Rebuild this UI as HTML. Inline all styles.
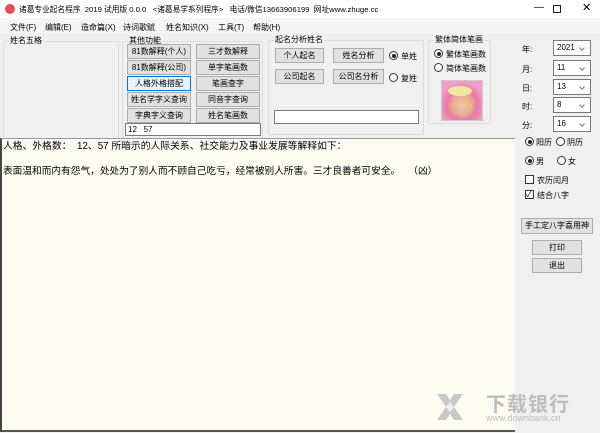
<!DOCTYPE html>
<html><head><meta charset="utf-8"><style>
*{box-sizing:border-box;margin:0;padding:0}
body{width:600px;height:433px;overflow:hidden;background:#f0f0f0;font-family:"Liberation Sans","Noto Sans CJK SC",sans-serif;font-size:8px;color:#000;position:relative}
.a{position:absolute;white-space:nowrap}
.btn{position:absolute;background:#e1e1e1;border:1px solid #adadad;text-align:center;font-size:8px;line-height:13px}
.grp{position:absolute;border:1px solid #dcdcdc;border-radius:2px}
.gl{position:absolute;top:-6px;left:5px;background:#f0f0f0;padding:0 1px;font-size:8px;line-height:10px}
.inp{position:absolute;background:#fff;border:1px solid #7a7a7a}
.rad{position:absolute;width:9px;height:9px;border:1px solid #333;border-radius:50%;background:#fff}
.rad.on::after{content:"";position:absolute;left:1.5px;top:1.5px;width:4px;height:4px;border-radius:50%;background:#222}
.sel{position:absolute;left:553px;width:38px;height:16px;background:#fff;border:1px solid #7a7a7a;font-size:8px;line-height:14px;padding-left:3px}
.sel::after{content:"";position:absolute;right:6px;top:5px;width:3px;height:3px;border-right:1px solid #777;border-bottom:1px solid #777;transform:rotate(45deg)}
</style></head><body>
<div class="a" style="left:0;top:0;width:600px;height:18px;background:#fff"></div>
<div class="a" style="left:5px;top:4px;width:10px;height:10px;border-radius:50%;background:#e05050"></div>
<div class="a" style="left:19px;top:4px;font-size:7.7px">诸葛专业起名程序 &nbsp;2019 试用版 0.0.0 &nbsp;&nbsp;&lt;诸葛易学系列程序&gt; &nbsp;&nbsp;电话/微信13663906199 &nbsp;网址www.zhuge.cc</div>
<div class="a" style="left:534px;top:2px;font-size:10px">—</div>
<div class="a" style="left:553px;top:5px;width:8px;height:8px;border:1px solid #222"></div>
<div class="a" style="left:582px;top:1px;font-size:11px">✕</div>
<div class="a" style="left:0;top:18px;width:600px;height:15px;background:#f5f5f5"></div>
<div class="a" style="left:10px;top:22px">文件(F)</div>
<div class="a" style="left:45px;top:22px">编辑(E)</div>
<div class="a" style="left:81px;top:22px">造命篇(X)</div>
<div class="a" style="left:123px;top:22px">诗词歌赋</div>
<div class="a" style="left:166px;top:22px">姓名知识(X)</div>
<div class="a" style="left:218px;top:22px">工具(T)</div>
<div class="a" style="left:253px;top:22px">帮助(H)</div>

<div class="grp" style="left:3px;top:41px;width:116px;height:98px"><span class="gl">姓名五格</span></div>
<div class="grp" style="left:122px;top:41px;width:141px;height:98px"><span class="gl">其他功能</span></div>
<div class="btn" style="left:127px;top:44px;width:64px;height:15px">81数解释(个人)</div>
<div class="btn" style="left:196px;top:44px;width:64px;height:15px">三才数解释</div>
<div class="btn" style="left:127px;top:60px;width:64px;height:15px">81数解释(公司)</div>
<div class="btn" style="left:196px;top:60px;width:64px;height:15px">单字笔画数</div>
<div class="btn" style="left:127px;top:76px;width:64px;height:15px;border-color:#0078d7;background:#e5f1fb">人格外格搭配</div>
<div class="btn" style="left:196px;top:76px;width:64px;height:15px">笔画查字</div>
<div class="btn" style="left:127px;top:92px;width:64px;height:15px">姓名学字义查询</div>
<div class="btn" style="left:196px;top:92px;width:64px;height:15px">同音字查询</div>
<div class="btn" style="left:127px;top:108px;width:64px;height:15px">字典字义查询</div>
<div class="btn" style="left:196px;top:108px;width:64px;height:15px">姓名笔画数</div>
<div class="inp" style="left:125px;top:123px;width:136px;height:13px;font-size:8px;line-height:11px;padding-left:2px">12 &nbsp; 57</div>

<div class="grp" style="left:268px;top:40px;width:156px;height:95px"><span class="gl">起名分析姓名</span></div>
<div class="btn" style="left:275px;top:48px;width:49px;height:15px">个人起名</div>
<div class="btn" style="left:333px;top:48px;width:51px;height:15px">姓名分析</div>
<div class="btn" style="left:275px;top:69px;width:49px;height:15px">公司起名</div>
<div class="btn" style="left:333px;top:69px;width:51px;height:15px">公司名分析</div>
<div class="rad on" style="left:389px;top:51px"></div><div class="a" style="left:401px;top:51px">单姓</div>
<div class="rad" style="left:389px;top:73px"></div><div class="a" style="left:401px;top:73px">复姓</div>
<div class="inp" style="left:274px;top:110px;width:145px;height:14px"></div>

<div class="grp" style="left:428px;top:40px;width:63px;height:84px"><span class="gl">繁体简体笔画</span></div>
<div class="rad on" style="left:434px;top:49px"></div><div class="a" style="left:446px;top:49px">繁体笔画数</div>
<div class="rad" style="left:434px;top:63px"></div><div class="a" style="left:446px;top:63px">简体笔画数</div>
<div class="a" style="left:441px;top:80px;width:42px;height:41px;background:radial-gradient(circle at 50% 62%,#f2c6a8 0,#e8b090 30%,#e878a8 48%,#f0a0c8 75%);border:1px solid #ccc"></div>
<div class="a" style="left:448px;top:86px;width:24px;height:10px;border-radius:50%;background:#efe8a0"></div>

<div class="a" style="left:522px;top:44px">年:</div><div class="sel" style="top:40px">2021</div>
<div class="a" style="left:522px;top:64px">月:</div><div class="sel" style="top:60px">11</div>
<div class="a" style="left:522px;top:83px">日:</div><div class="sel" style="top:79px">13</div>
<div class="a" style="left:522px;top:101px">时:</div><div class="sel" style="top:97px">8</div>
<div class="a" style="left:522px;top:120px">分:</div><div class="sel" style="top:116px">16</div>

<div class="a" style="left:0;top:138px;width:515px;height:294px;background:#fcfcf3;border-left:2px solid #444;border-top:1px solid #999;border-bottom:2px solid #555"></div>
<div class="a" style="left:3px;top:141px;font-size:9.8px;line-height:12px">人格、外格数： &nbsp;12、57 所暗示的人际关系、社交能力及事业发展等解释如下：</div>
<div class="a" style="left:3px;top:166px;font-size:9.7px;line-height:12px">表面温和而内有怨气，处处为了别人而不顾自己吃亏，经常被别人所害。三才良善者可安全。 &nbsp;&nbsp;（凶）</div>

<div class="rad on" style="left:525px;top:137px"></div><div class="a" style="left:536px;top:137px">阳历</div>
<div class="rad" style="left:556px;top:137px"></div><div class="a" style="left:567px;top:137px">阴历</div>
<div class="rad on" style="left:525px;top:156px"></div><div class="a" style="left:536px;top:156px">男</div>
<div class="rad" style="left:557px;top:156px"></div><div class="a" style="left:568px;top:156px">女</div>
<div class="a" style="left:525px;top:175px;width:9px;height:9px;border:1px solid #333;background:#fff"></div><div class="a" style="left:537px;top:175px">农历闰月</div>
<div class="a" style="left:525px;top:190px;width:9px;height:9px;border:1px solid #333;background:#fff;font-size:8px;line-height:7px">✓</div><div class="a" style="left:537px;top:190px">结合八字</div>
<div class="btn" style="left:521px;top:218px;width:72px;height:16px;line-height:14px">手工定八字喜用神</div>
<div class="btn" style="left:532px;top:240px;width:50px;height:15px">打印</div>
<div class="btn" style="left:532px;top:258px;width:50px;height:15px">退出</div>

<svg class="a" style="left:435px;top:392px" width="30" height="30" viewBox="0 0 30 30"><path d="M2 2h9l4 6 4-6h9l-9 13 9 13h-9l-4-6-4 6H2l9-13z" fill="#c8c8c8"/><path d="M15 10l4 5-4 5-4-5z" fill="#eee"/></svg>
<div class="a" style="left:486px;top:388px;font-size:20px;color:#bdbdbd;font-weight:bold;letter-spacing:1px">下载银行</div>
<div class="a" style="left:486px;top:413px;font-size:9px;color:#bdbdbd">www.downbank.cn</div>
</body></html>
